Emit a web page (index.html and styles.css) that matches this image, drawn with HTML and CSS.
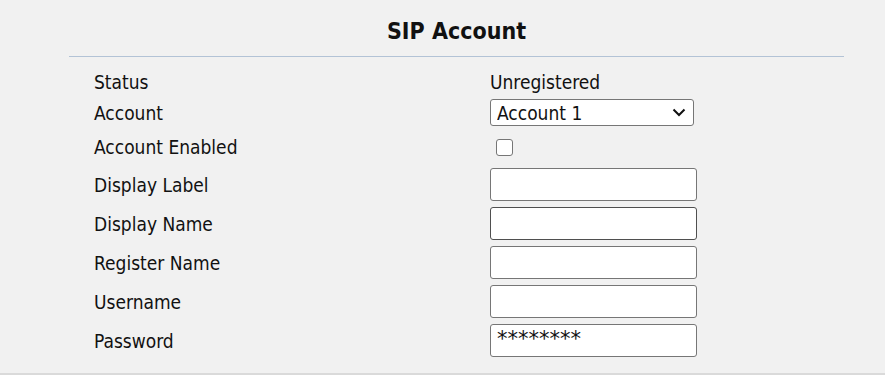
FILE: index.html
```html
<!DOCTYPE html>
<html>
<head>
<meta charset="utf-8">
<link rel="stylesheet" href="styles.css">
</head>
<body>
<div class="page">
  <div class="panel">
    <h1 class="title">SIP Account</h1>
    <div class="rule"></div>
    <div class="form">
      <div class="row row-status">
        <span class="label">Status</span>
        <span class="value">Unregistered</span>
      </div>
      <div class="row row-select">
        <span class="label">Account</span>
        <div class="select-wrap">
          <select class="select">
            <option>Account 1</option>
          </select>
          <svg class="chevron" width="14" height="9" viewBox="0 0 14 9"><path d="M1.5 1.5 L7 7 L12.5 1.5" fill="none" stroke="#111" stroke-width="2"/></svg>
        </div>
      </div>
      <div class="row row-check">
        <span class="label">Account Enabled</span>
        <span class="check-cell"><input type="checkbox" class="check"></span>
      </div>
      <div class="row row-input">
        <span class="label">Display Label</span>
        <input type="text" class="field">
      </div>
      <div class="row row-input">
        <span class="label">Display Name</span>
        <input type="text" class="field field-hover">
      </div>
      <div class="row row-input">
        <span class="label">Register Name</span>
        <input type="text" class="field">
      </div>
      <div class="row row-input">
        <span class="label">Username</span>
        <input type="text" class="field">
      </div>
      <div class="row row-input">
        <span class="label">Password</span>
        <input type="text" class="field field-pass" value="********">
      </div>
    </div>
  </div>
  <div class="bottom-rule"></div>
</div>
</body>
</html>
```

FILE: styles.css
```css
html, body {
  margin: 0;
  padding: 0;
}
body {
  background: #f1f1f1;
  font-family: "DejaVu Sans Condensed", "DejaVu Sans", sans-serif;
  color: #111;
  width: 885px;
  height: 375px;
  overflow: hidden;
}
.page {
  height: 375px;
  display: flex;
  flex-direction: column;
}
.panel {
  flex: 1;
  padding-left: 69px;
  width: 775px;
}
.title {
  margin: 0;
  padding-top: 18px;
  height: 55px;
  box-sizing: border-box;
  text-align: center;
  font-size: 23px;
  font-weight: bold;
  line-height: 27px;
  color: #111;
}
.rule {
  height: 1px;
  margin-top: 1px;
  background: #b3c3d6;
}
.form {
  padding-left: 25px;
  padding-top: 14px;
  display: flex;
  flex-direction: column;
  gap: 6px;
}
.row {
  display: flex;
  align-items: center;
}
.label {
  width: 396px;
  font-size: 19px;
}
.value {
  font-size: 19px;
}
.row-status { height: 22px; }
.row-select { height: 27px; }
.row-check { height: 30px; }
.row-input { height: 33px; }
.select-wrap {
  position: relative;
  width: 204px;
  height: 27px;
}
.select {
  appearance: none;
  -webkit-appearance: none;
  width: 204px;
  height: 27px;
  box-sizing: border-box;
  border: 1px solid #767676;
  border-radius: 3px;
  background: #fff;
  font-family: inherit;
  font-size: 19px;
  color: #111;
  padding: 0 0 0 6px;
  margin: 0;
}
.chevron {
  position: absolute;
  right: 8px;
  top: 9px;
}
.check-cell {
  display: flex;
  padding-left: 6px;
}
.check {
  appearance: none;
  -webkit-appearance: none;
  width: 17px;
  height: 17px;
  margin: 0;
  box-sizing: border-box;
  border: 1px solid #767676;
  border-radius: 3px;
  background: #fff;
}
.field {
  width: 207px;
  height: 33px;
  box-sizing: border-box;
  margin: 0;
  border: 1px solid #767676;
  border-radius: 3px;
  background: #fff;
  padding: 0 6px;
  font-family: inherit;
  font-size: 16px;
  color: #111;
}
.field-hover {
  border-color: #4f4f4f;
}
.field-pass {
  font-family: "DejaVu Sans", sans-serif;
  font-size: 21px;
  line-height: 21px;
  padding-top: 0;
  padding-bottom: 4px;
}
.bottom-rule {
  height: 2px;
  background: #dadada;
}
```
